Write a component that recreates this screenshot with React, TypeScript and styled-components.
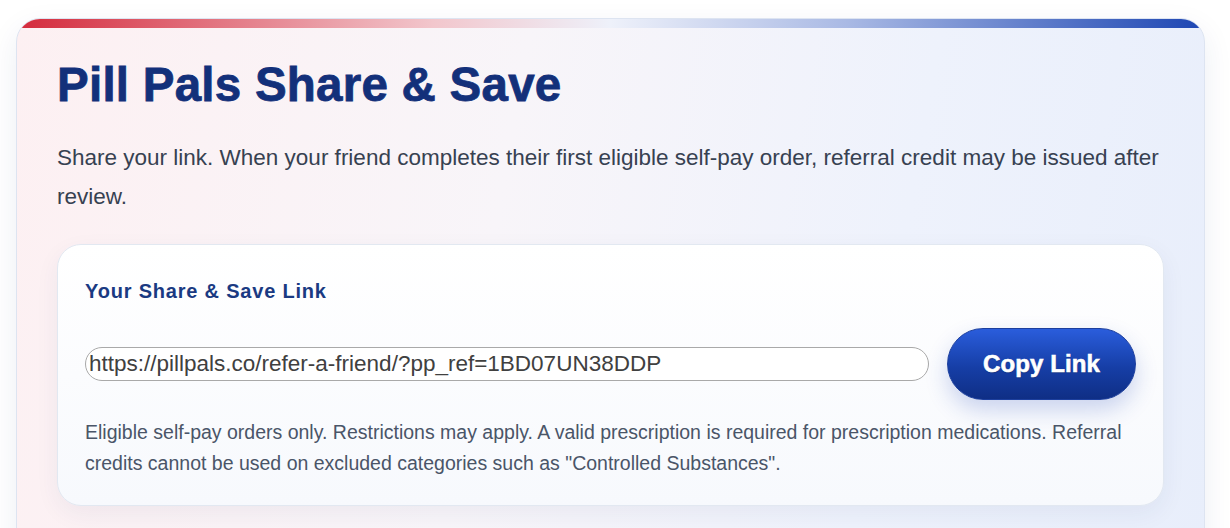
import React from "react";
import styled, { createGlobalStyle } from "styled-components";

const Global = createGlobalStyle`
  html, body { margin: 0; padding: 0; background: #ffffff; }
  body { font-family: "Liberation Sans", Arial, sans-serif; }
  * { box-sizing: border-box; }
`;

const Page = styled.div`
  padding: 18px 25px 0 16px;
  height: 528px;
  overflow: hidden;
`;

const Card = styled.section`
  position: relative;
  border-radius: 24px;
  border: 1px solid #dde4f1;
  background: linear-gradient(100deg, #fdf0f2 0%, #f8f5f9 40%, #eef2fc 72%, #e8eefb 100%);
  box-shadow: 0 10px 30px rgba(30, 50, 110, 0.08);
  padding: 37px 40px 40px;
  overflow: hidden;
  min-height: 560px;
  &::before {
    content: "";
    position: absolute;
    left: 0;
    right: 0;
    top: 0;
    height: 9px;
    background: linear-gradient(90deg, #d42a3c 0%, #f2c6cc 35%, #eef1fa 50%, #a9b9e4 70%, #1d46b3 100%);
  }
`;

const Title = styled.h1`
  margin: 0;
  font-family: "Liberation Sans", Arial, sans-serif;
  font-weight: 700;
  font-size: 47.5px;
  line-height: 58px;
  color: #13307a;
  letter-spacing: 0.25px;
  -webkit-text-stroke: 0.8px #13307a;
`;

const Lead = styled.p`
  margin: 24px 0 28px;
  font-size: 22.5px;
  line-height: 39px;
  color: #374151;
`;

const Panel = styled.div`
  border-radius: 24px;
  border: 1px solid #e2e8f1;
  background: linear-gradient(180deg, #ffffff 0%, #f7f9fd 100%);
  box-shadow: 0 8px 24px rgba(30, 50, 110, 0.06);
  padding: 34px 27px 26px;
`;

const Label = styled.h2`
  margin: 0;
  font-size: 20px;
  line-height: 24px;
  font-weight: 700;
  color: #1a3a82;
  letter-spacing: 0.8px;
`;

const Row = styled.div`
  display: flex;
  align-items: center;
  gap: 18px;
  margin-top: 25px;
`;

const Field = styled.input`
  flex: 1;
  min-width: 0;
  height: 34px;
  border: 1px solid #a9a9a9;
  border-radius: 999px;
  padding: 0 3px;
  font-family: "Liberation Sans", Arial, sans-serif;
  font-size: 22.5px;
  color: #404040;
  background: #ffffff;
  outline: none;
`;

const CopyButton = styled.button`
  flex: none;
  width: 189px;
  height: 72px;
  border-radius: 999px;
  border: 1px solid #1c3f9e;
  background: linear-gradient(180deg, #2a5ddc 0%, #163ea6 55%, #0f2e85 100%);
  color: #ffffff;
  font-family: "Liberation Sans", Arial, sans-serif;
  font-weight: 700;
  font-size: 24px;
  letter-spacing: 0.1px;
  -webkit-text-stroke: 0.6px #ffffff;
  box-shadow: 0 10px 22px rgba(30, 70, 180, 0.22);
  cursor: pointer;
  text-shadow: 0 1px 1px rgba(0, 0, 0, 0.25);
`;

const Note = styled.p`
  margin: 17px 0 0;
  font-size: 19.5px;
  line-height: 31px;
  color: #4a5568;
`;

export default function App() {
  return (
    <>
      <Global />
      <Page>
        <Card>
          <Title>Pill Pals Share &amp; Save</Title>
          <Lead>
            Share your link. When your friend completes their first eligible self-pay order, referral credit may be
            issued after review.
          </Lead>
          <Panel>
            <Label>Your Share &amp; Save Link</Label>
            <Row>
              <Field readOnly value="https://pillpals.co/refer-a-friend/?pp_ref=1BD07UN38DDP" />
              <CopyButton>Copy Link</CopyButton>
            </Row>
            <Note>
              Eligible self-pay orders only. Restrictions may apply. A valid prescription is required for prescription
              medications. Referral credits cannot be used on excluded categories such as "Controlled Substances".
            </Note>
          </Panel>
        </Card>
      </Page>
    </>
  );
}
